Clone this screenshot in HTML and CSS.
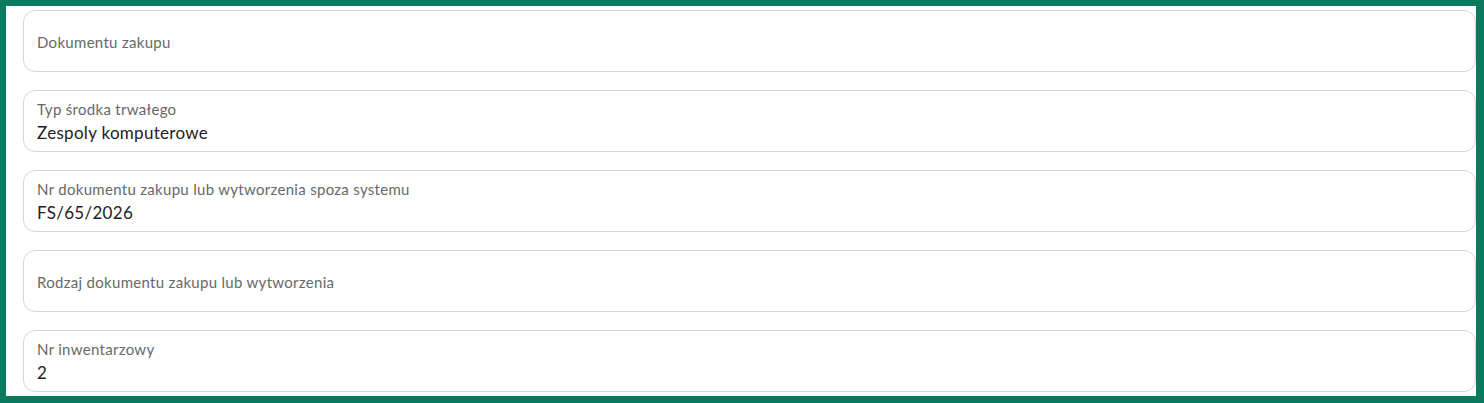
FILE: index.html
```html
<!DOCTYPE html>
<html lang="pl">
<head>
<meta charset="utf-8">
<link rel="stylesheet" href="styles.css">
</head>
<body>
<div class="frame">
  <div class="field empty"><span class="label">Dokumentu zakupu</span></div>
  <div class="field"><span class="label">Typ środka trwałego</span><span class="value">Zespoly komputerowe</span></div>
  <div class="field"><span class="label">Nr dokumentu zakupu lub wytworzenia spoza systemu</span><span class="value">FS/65/2026</span></div>
  <div class="field empty"><span class="label">Rodzaj dokumentu zakupu lub wytworzenia</span></div>
  <div class="field"><span class="label">Nr inwentarzowy</span><span class="value">2</span></div>
</div>
</body>
</html>
```
FILE: styles.css
```css
html, body {
  margin: 0;
  padding: 0;
  background: #ffffff;
}
body {
  font-family: Lato, "Liberation Sans", sans-serif;
  width: 1484px;
  height: 403px;
  overflow: hidden;
}
.frame {
  box-sizing: border-box;
  width: 1484px;
  height: 403px;
  border-style: solid;
  border-color: #0a7b5f;
  border-width: 6px 8px 7px 6px;
  padding: 4px 0 4px 17px;
  display: flex;
  flex-direction: column;
  gap: 18px;
  background: #ffffff;
}
.field {
  box-sizing: border-box;
  height: 62px;
  border: 1px solid #d6d6d6;
  border-radius: 12px;
  padding: 9px 13px 0;
  display: flex;
  flex-direction: column;
  gap: 5px;
}
.field.empty {
  padding-top: 2px;
  justify-content: center;
}
.label {
  font-size: 15px;
  line-height: 18px;
  letter-spacing: 0.3px;
  color: #686868;
}
.value {
  font-size: 17px;
  line-height: 20px;
  letter-spacing: 0.3px;
  color: #222222;
}
```
